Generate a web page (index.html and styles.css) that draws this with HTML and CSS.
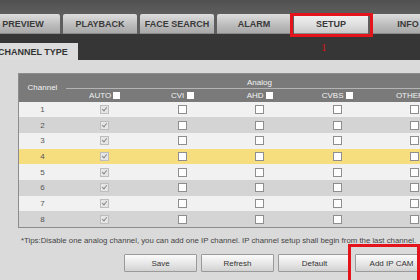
FILE: index.html
```html
<!DOCTYPE html>
<html lang="en">
<head>
    <meta charset="UTF-8">
    <title>Setup - Channel Type</title>
    <link rel="stylesheet" href="styles.css">
</head>
<body>
    <div class="page">
        <div class="top-strip"></div>
        <nav class="main-tabs">
            <span class="tab">PREVIEW</span>
            <span class="tab">PLAYBACK</span>
            <span class="tab">FACE SEARCH</span>
            <span class="tab">ALARM</span>
            <span class="tab active">SETUP</span>
            <span class="tab">INFO</span>
        </nav>
        <div class="sub-bar">
            <span class="sub-tab">CHANNEL TYPE</span>
        </div>
        <div class="content">
            <table class="channel-table">
                <thead>
                    <tr class="head-top">
                        <th rowspan="2" class="col-channel">Channel</th>
                        <th colspan="5" class="analog">Analog</th>
                    </tr>
                    <tr class="head-sub">
                        <th>AUTO <span class="hbox"></span></th>
                        <th>CVI <span class="hbox"></span></th>
                        <th>AHD <span class="hbox"></span></th>
                        <th>CVBS <span class="hbox"></span></th>
                        <th>OTHER <span class="hbox"></span></th>
                    </tr>
                </thead>
                <tbody id="rows"></tbody>
            </table>
            <p class="tips">*Tips:Disable one analog channel, you can add one IP channel. IP channel setup shall begin from the last channel.</p>
            <div class="actions">
                <button class="btn">Save</button>
                <button class="btn">Refresh</button>
                <button class="btn">Default</button>
                <button class="btn">Add IP CAM</button>
            </div>
        </div>

        <!-- annotations drawn over the screen -->
        <span class="mark mark-setup"></span>
        <span class="mark-num">1</span>
        <span class="mark mark-add"></span>
    </div>
    <script>
        const tbody = document.getElementById('rows');
        for (let i = 1; i <= 8; i++) {
            const tr = document.createElement('tr');
            if (i === 4) tr.className = 'selected';
            let html = `<td class="num">${i}</td>`;
            html += '<td><span class="cbox checked"></span></td>';
            for (let c = 0; c < 4; c++) html += '<td><span class="cbox"></span></td>';
            tr.innerHTML = html;
            tbody.appendChild(tr);
        }
    </script>
</body>
</html>
```

FILE: styles.css
```css
body, html {
    margin: 0;
    height: 100%;
    overflow: hidden;
    font-family: "Liberation Sans", Arial, sans-serif;
    background-color: #dadada;
}

.page {
    position: relative;
    width: 420px;
    height: 280px;
    overflow: hidden;
    display: flex;
    flex-direction: column;
}

.top-strip {
    height: 14px;
    background: linear-gradient(#505050, #5e5e5e);
}

.main-tabs {
    display: flex;
    gap: 3px;
    height: 20px;
    margin-left: -14px;
    background-color: #5e5e5e;
}

.tab {
    flex: 0 0 74px;
    display: flex;
    align-items: center;
    justify-content: center;
    font-size: 9px;
    font-weight: bold;
    color: #3a3a3a;
    background: linear-gradient(#dedede, #b9b9b9 60%, #a6a6a6);
    border-radius: 2px 2px 0 0;
    box-shadow: inset 0 -1px 0 #8a8a8a;
}

.tab.active { background: linear-gradient(#f4f4f4, #dcdcdc 60%, #c6c6c6); }

.sub-bar {
    height: 26px;
    display: flex;
    align-items: flex-end;
    background-color: #363636;
}

.sub-tab {
    height: 17px;
    margin-left: -12px;
    padding: 0 10px;
    display: flex;
    align-items: center;
    font-size: 9px;
    font-weight: bold;
    color: #333;
    background-color: #dcdcdc;
}

.content {
    flex: 1;
    padding: 13px 0 0 18px;
}

.channel-table {
    border-collapse: collapse;
    table-layout: fixed;
    width: 436px;
    border: 1px solid #8c8c8c;
    font-size: 8px;
}

.channel-table th {
    background-color: #7a7a7a;
    color: #f2f2f2;
    font-weight: normal;
    padding: 0;
    text-align: center;
}

.col-channel { width: 47px; }

.head-top { height: 15px; }
.head-sub { height: 13px; }

.analog {
    border-bottom: 1px solid #b4b4b4;
    padding-top: 2px !important;
}

.hbox {
    display: inline-block;
    width: 7px;
    height: 7px;
    background-color: #fff;
    vertical-align: -1px;
}

.channel-table td {
    height: 15.7px;
    padding: 0;
    text-align: center;
    color: #555;
}

.channel-table tbody tr:nth-child(odd) { background-color: #f1f1f1; }
.channel-table tbody tr:nth-child(even) { background-color: #d4d4d4; }
.channel-table tbody tr.selected { background-color: #f6dd7e; }

.cbox {
    display: inline-block;
    width: 7px;
    height: 7px;
    border: 1px solid #8e8e8e;
    background-color: #fff;
    vertical-align: middle;
    position: relative;
}

.cbox.checked {
    border-color: #bdbdbd;
    background-color: #e6e6e6;
}

.cbox.checked::after {
    content: "";
    position: absolute;
    left: 2px;
    top: 0px;
    width: 2px;
    height: 4px;
    border: solid #8a8a8a;
    border-width: 0 1px 1px 0;
    transform: rotate(40deg);
}

.tips {
    margin: 8px 0 0 3px;
    font-size: 7.8px;
    color: #444;
    white-space: nowrap;
}

.actions {
    display: flex;
    gap: 4px;
    margin: 9px 0 0 106px;
}

.btn {
    flex: 0 0 73px;
    height: 18px;
    padding: 0;
    font-family: "Liberation Sans", Arial, sans-serif;
    font-size: 8px;
    color: #333;
    border: 1px solid #9a9a9a;
    border-radius: 1px;
    background: linear-gradient(#fbfbfb, #e4e4e4 60%, #d2d2d2);
}

.mark {
    position: absolute;
    border: 3px solid #e3141c;
}

.mark-setup {
    left: 290px;
    top: 13px;
    width: 77px;
    height: 18px;
}

.mark-add {
    left: 348px;
    top: 244px;
    width: 66px;
    height: 60px;
}

.mark-num {
    position: absolute;
    left: 321px;
    top: 41px;
    font-family: "Liberation Serif", serif;
    font-size: 11px;
    color: #d8141c;
}
```
